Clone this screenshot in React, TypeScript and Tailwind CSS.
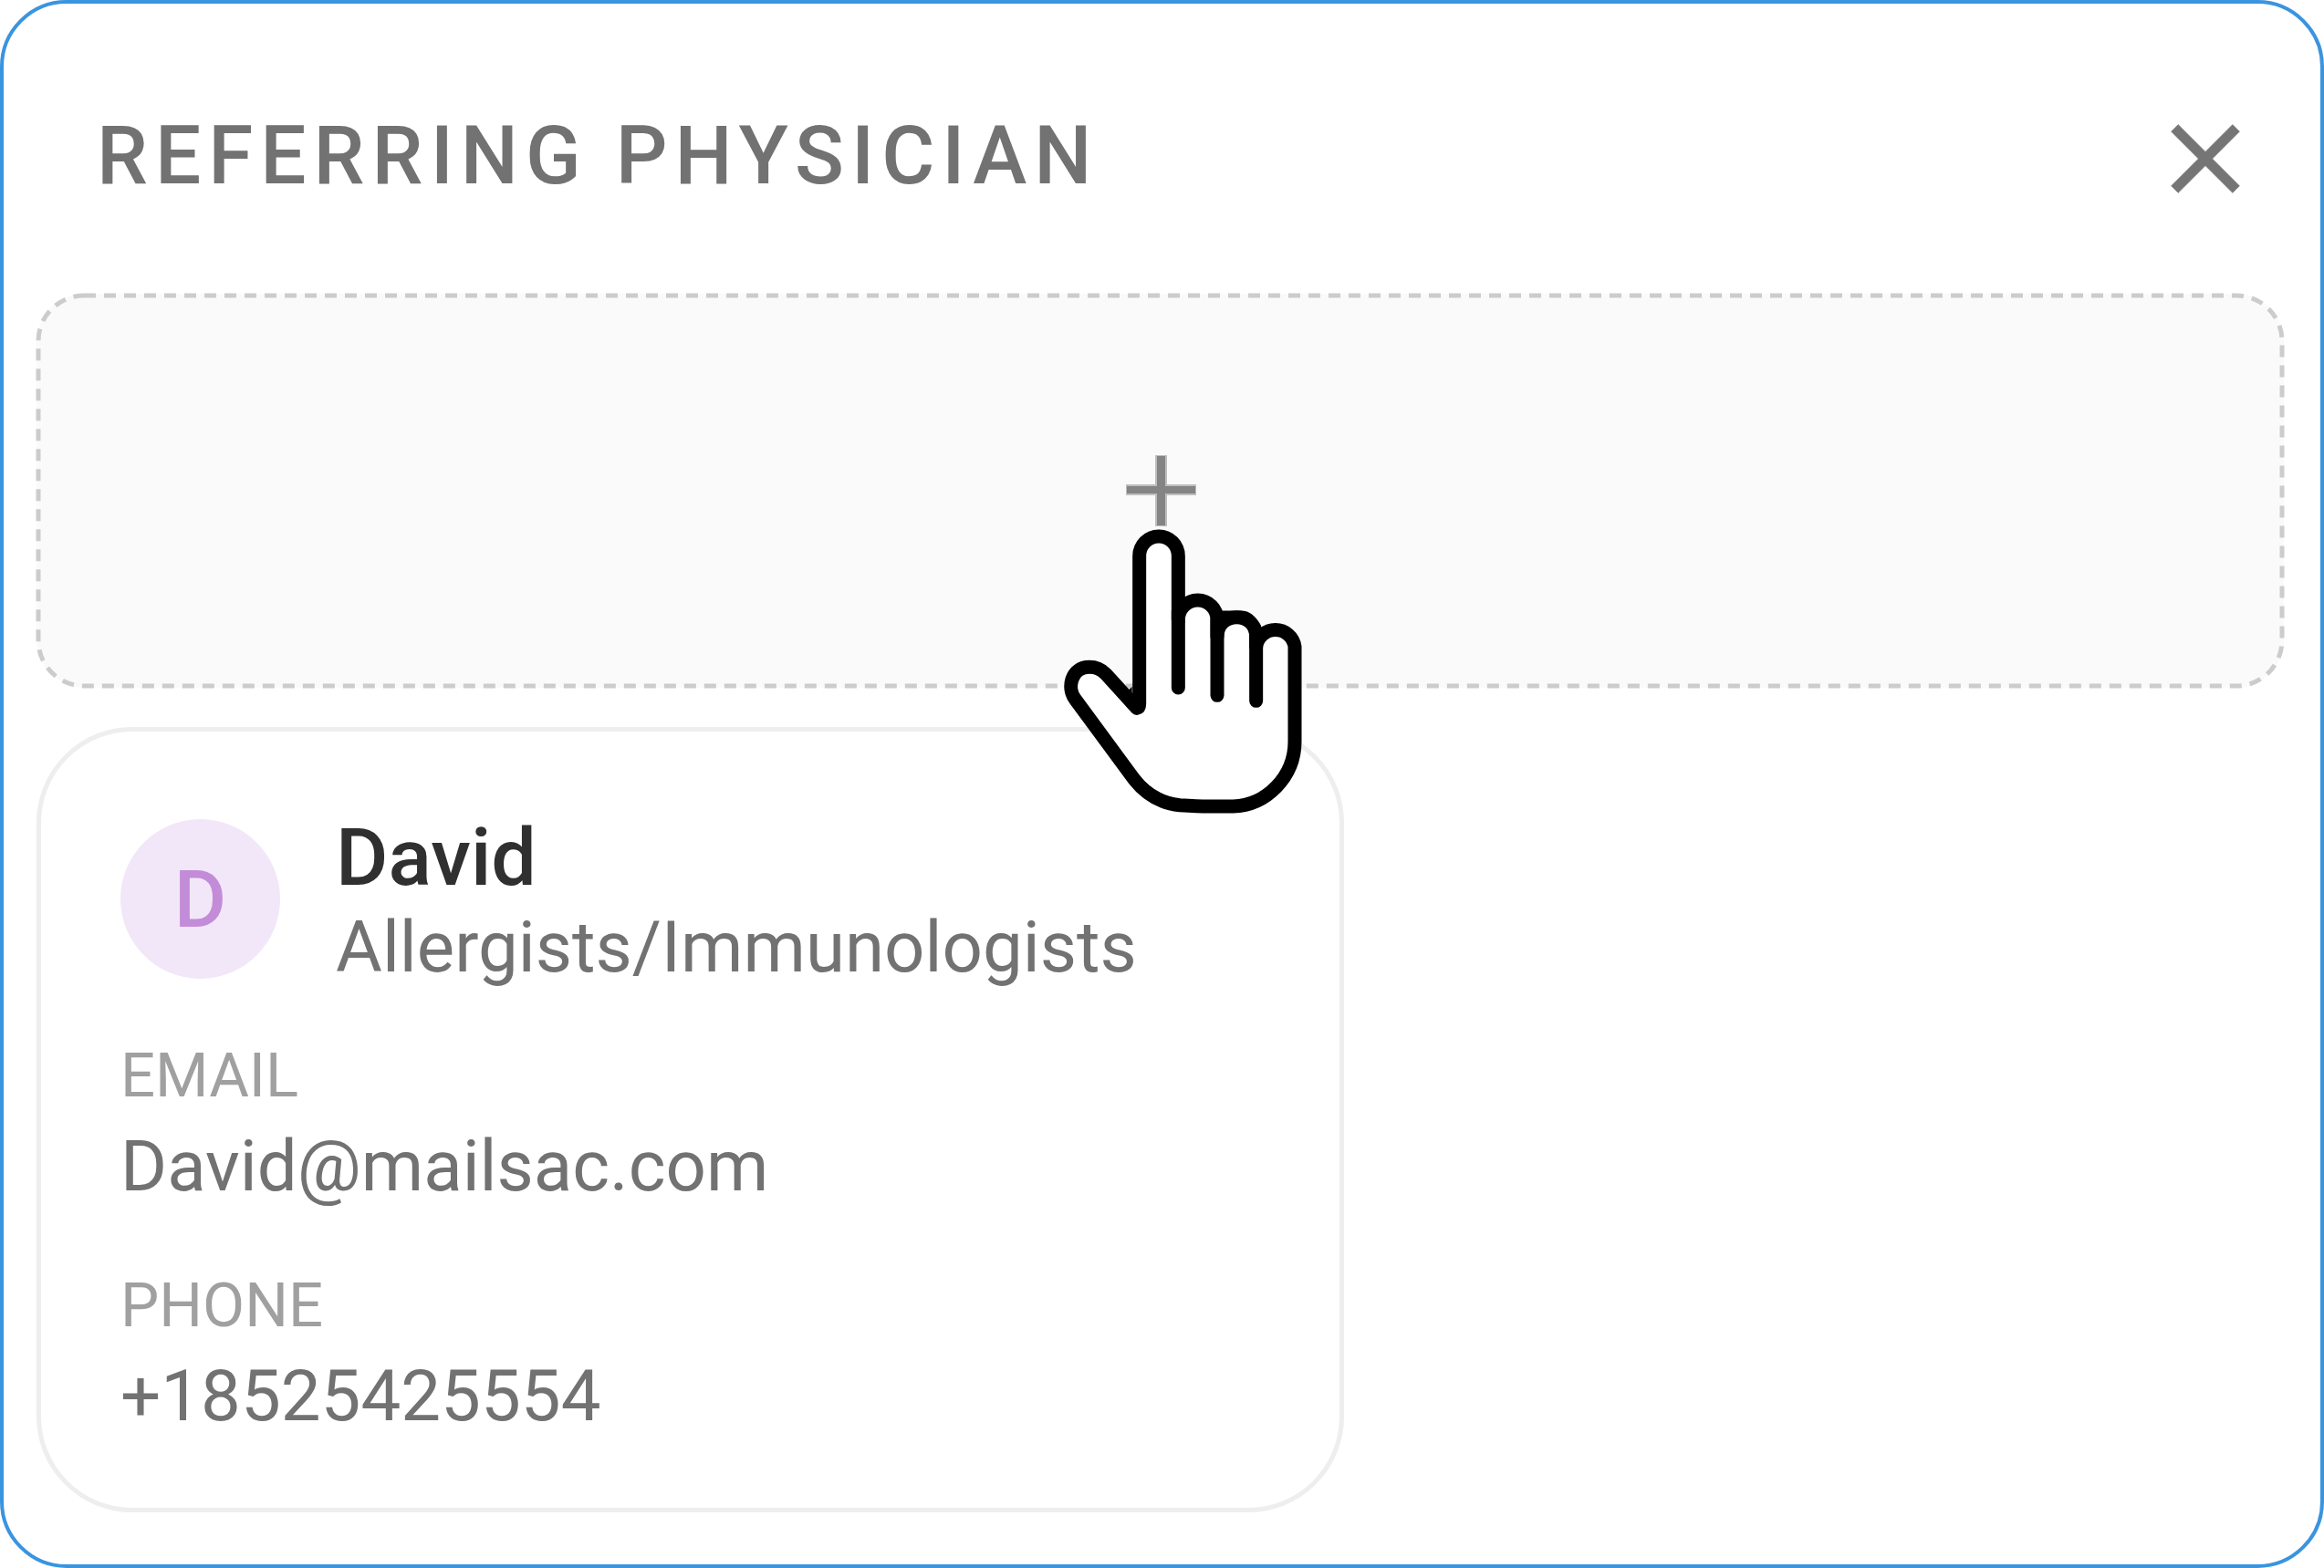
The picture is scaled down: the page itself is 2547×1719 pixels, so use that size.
import React from "react";

function CloseIcon() {
  return (
    <svg viewBox="0 0 24 24" className="size-32" fill="#757575" stroke="#757575" strokeWidth="0.15" aria-hidden="true">
      <path d="M19 6.41 17.59 5 12 10.59 6.41 5 5 6.41 10.59 12 5 17.59 6.41 19 12 13.41 17.59 19 19 17.59 13.41 12z" />
    </svg>
  );
}

function PlusIcon() {
  return (
    <svg viewBox="0 0 78 78" className="w-[78px] h-[78px]" aria-hidden="true">
      <path d="M33 0h13v78H33zM1 32h77v12H1z" fill="#bebebe" />
      <path d="M35 1h9v76h-9zM2 34h75v8H2z" fill="#848484" />
    </svg>
  );
}

function PointerHand() {
  return (
    <svg
      viewBox="100 325 801 951"
      className="pointer-events-none absolute left-1/2 top-1/2 z-10 mt-10 -ml-[109px] h-[317px] w-[267px]"
      fill="none"
      stroke="#000"
      strokeWidth="45"
      strokeLinecap="round"
      strokeLinejoin="round"
      aria-hidden="true"
    >
      <path
        fill="#fff"
        d="M349 920Q357 918 357 906V420A64 65 0 0 1 485 420V630A64 65 0 0 1 613 630V685C613 645 642 621 677 621C715 621 741 648 741 685V718A64 63 0 0 1 868 718V1030C868 1145 775 1240 665 1243H585C550 1243 520 1241 490 1239C430 1233 380 1205 340 1154L147 892C118 856 131 785 193 785C214 785 232 793 247 808Z"
      />
      <path d="M485 600V853M613 630V878M741 685V896" />
      <path d="M620 599.500H690C722 599.500 738 618 756 647L741 690L700 625L625 640Z" fill="#000" stroke="none" />
      <path d="M333 850V872L322 860Z" fill="#000" stroke="none" />
    </svg>
  );
}

function Field({ label, value }: { label: string; value: string }) {
  return (
    <div>
      <dt className="text-[67px] leading-[100px] text-[#a0a0a0]">{label}</dt>
      <dd className="text-[78px] leading-[100px] text-[#727272]">{value}</dd>
    </div>
  );
}

export default function App() {
  return (
    <main className="flex min-h-screen flex-col rounded-[73px] border-4 border-[#3a94e0] bg-white px-9 pb-14 font-[Roboto,sans-serif]">
      <header className="flex items-start justify-between pb-[84px] pl-[66px] pr-[26px] pt-[106px]">
        <h1 className="text-[89px] font-medium leading-[122px] tracking-[8px] text-[#727272]">
          REFERRING PHYSICIAN
        </h1>
        <button type="button" aria-label="Close">
          <CloseIcon />
        </button>
      </header>

      <button
        type="button"
        aria-label="Add referring physician"
        className="relative mr-1 flex h-[432px] items-center justify-center rounded-[53px] bg-[#fafafa]"
      >
        <span className="absolute inset-[2px]">
          <svg className="size-full overflow-visible" aria-hidden="true">
            <rect width="100%" height="100%" rx="50" fill="none" stroke="#cccccc" strokeWidth="5" strokeDasharray="13 9" />
          </svg>
        </span>
        <PlusIcon />
        <PointerHand />
      </button>

      <section className="mt-[43px] w-[58.1%] rounded-[105px] border-[5px] border-[#eeeeee] pb-[72px] pl-[87px] pr-20 pt-24">
        <div className="flex items-start gap-[61px]">
          <div className="flex size-[175px] shrink-0 items-center justify-center rounded-full bg-[#f2e7f8] text-[88px] font-medium leading-none text-[#c38cd8]">
            D
          </div>
          <div>
            <h2 className="text-[88px] font-medium leading-[84px] text-[#303030]">David</h2>
            <p className="text-[78px] leading-[114px] text-[#727272]">Allergists/Immunologists</p>
          </div>
        </div>
        <dl className="mt-[33px] flex flex-col gap-[52px]">
          <Field label="EMAIL" value="David@mailsac.com" />
          <Field label="PHONE" value="+18525425554" />
        </dl>
      </section>
    </main>
  );
}
